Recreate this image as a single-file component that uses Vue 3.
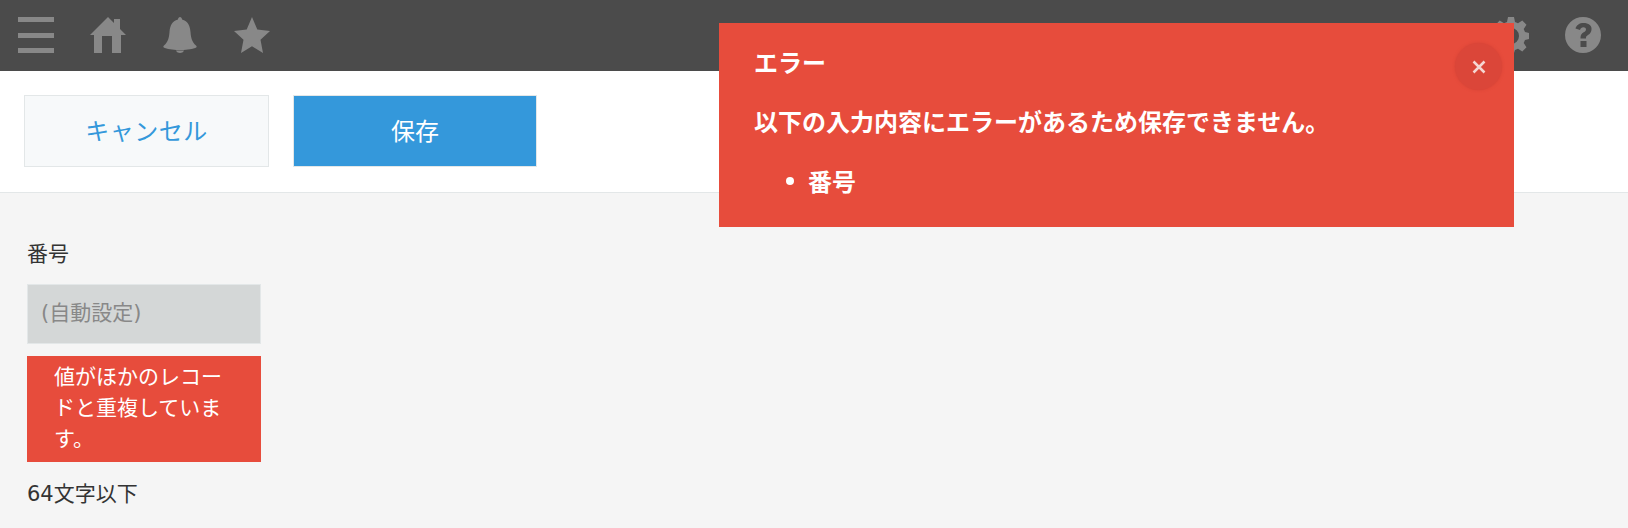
<script setup>
const errorLines = ['番号']
</script>

<template>
  <div class="page">
    <header class="top">
      <div class="top-group">
        <button class="top-btn" aria-label="menu">
          <svg viewBox="0 0 36 36" class="icon">
            <rect x="0" y="0" width="36" height="5" />
            <rect x="0" y="16" width="36" height="5" />
            <rect x="0" y="31" width="36" height="5" />
          </svg>
        </button>
        <button class="top-btn" aria-label="home">
          <svg viewBox="0 0 36 36" class="icon">
            <path d="M18 0 24 6V2h6v10L36 18H31V36H22V19H12V36H4V18H0Z" />
          </svg>
        </button>
        <button class="top-btn" aria-label="notifications">
          <svg viewBox="0 0 36 36" class="icon">
            <path d="M16 2.500C16 1 17 0 18 0s2 1 2 2.500C26 4 28 9 28.500 15c.5 6 1.500 10 5.500 13.500 1.200 1 .8 1.900-.8 2.400C29 32.300 23 33 18 33S7 32.300 2.800 30.900c-1.600-.5-2-1.400-.8-2.400C6 25 7 21 7.500 15 8 9 10 4 16 2.500Z" />
            <path d="M14 33.500h8C21.300 35.300 19.500 36 18 36s-3.300-.7-4-2.500Z" />
          </svg>
        </button>
        <button class="top-btn" aria-label="favorites">
          <svg viewBox="0 0 36 36" class="icon">
            <path d="M18 0 23.300 12.500 36 14 26.500 22.800 29 36 18 29.300 7 36 9.500 22.800 0 14 12.700 12.500Z" />
          </svg>
        </button>
      </div>
      <div class="top-group">
        <button class="top-btn" aria-label="settings">
          <svg viewBox="0 0 36 36" class="icon">
            <path fill-rule="evenodd" d="M15 0h6l1 5 3 1.300 4.300-2.800 4.200 4.200L30.700 12l1.300 3 4 1v6l-4 1-1.300 3 2.800 4.300-4.200 4.200L25 31.700 22 33l-1 3h-6l-1-3-3-1.300-4.300 2.800-4.200-4.200L5.300 26 4 23l-4-1v-6l4-1 1.300-3-2.800-4.300 4.200-4.200L11 6.300 14 5ZM18 11a8 8 0 1 0 0 16 8 8 0 0 0 0-16Z" />
          </svg>
        </button>
        <button class="top-btn" aria-label="help">
          <svg viewBox="0 0 36 36" class="icon">
            <path fill-rule="evenodd" d="M18 0a18 18 0 1 1 0 36 18 18 0 0 1 0-36ZM15.500 24v6h6v-6ZM18.500 6C14.500 6 11.500 8 10.500 11.500l4.500 1.500c.5-1.800 1.800-2.800 3.300-2.800 1.600 0 2.700.9 2.700 2.200 0 1.200-.8 1.900-2.300 2.900-2.200 1.400-3.200 3-3.200 5.700v.5h5.500v-.4c0-1.400.5-2 2-3 2.300-1.500 3.500-3.200 3.500-5.800C27 8.500 23.500 6 18.500 6Z" />
          </svg>
        </button>
      </div>
    </header>

    <div class="toolbar">
      <button class="btn cancel">キャンセル</button>
      <button class="btn save">保存</button>
    </div>

    <main class="content">
      <div class="field">
        <div class="label">番号</div>
        <div class="input">(自動設定)</div>
        <div class="field-error">値がほかのレコードと重複しています。</div>
        <div class="hint">64文字以下</div>
      </div>
    </main>

    <section class="notify">
      <h2 class="notify-title">エラー</h2>
      <p class="notify-msg">以下の入力内容にエラーがあるため保存できません。</p>
      <ul class="notify-list">
        <li v-for="line in errorLines" :key="line">{{ line }}</li>
      </ul>
      <button class="notify-close" aria-label="close">
        <svg viewBox="0 0 14 14" class="close-x">
          <path d="M1.500 1.500 12.500 12.500M12.500 1.500 1.500 12.500" />
        </svg>
      </button>
    </section>
  </div>
</template>

<style>
html, body {
  margin: 0;
  height: 100%;
  background: #f5f5f5;
  overflow: hidden;
}
</style>

<style scoped>
.page {
  position: relative;
  height: 528px;
  font-family: "Noto Sans CJK JP", "Noto Sans", sans-serif;
  color: #333;
  font-size: 21px;
  background: #f5f5f5;
  overflow: hidden;
}
.top {
  display: flex;
  justify-content: space-between;
  height: 71px;
  padding-right: 9px;
  background: #4b4b4b;
}
.top-group {
  display: flex;
}
.top-btn {
  width: 72px;
  height: 71px;
  padding: 17px 18px 18px;
  border: 0;
  background: none;
}
.icon {
  display: block;
  width: 36px;
  height: 36px;
  fill: #888;
}
.toolbar {
  display: flex;
  gap: 24px;
  height: 122px;
  box-sizing: border-box;
  padding: 24px 24px 25px;
  background: #fff;
  border-bottom: 1px solid #e3e7e8;
}
.btn {
  width: 244px;
  height: 72px;
  padding: 0 0 3px;
  font: inherit;
  font-size: 24px;
  border: 1px solid #e3e7e8;
}
.cancel {
  width: 245px;
  letter-spacing: 0.5px;
  background: #f7f9fa;
  color: #3498db;
}
.save {
  background: #3498db;
  color: #fff;
}
.content {
  padding: 42px 27px 0;
}
.field {
  width: 234px;
}
.label {
  line-height: 34px;
}
.input {
  box-sizing: border-box;
  height: 60px;
  margin-top: 15px;
  padding-left: 13px;
  font-family: "DejaVu Sans", "Noto Sans CJK JP", sans-serif;
  line-height: 56px;
  color: #888;
  background: #d4d7d7;
  border: 1px solid #e3e7e8;
}
.field-error {
  margin-top: 12px;
  padding: 4px 27px 9px;
  line-height: 31px;
  color: #fff;
  background: #e74c3c;
}
.hint {
  margin-top: 15px;
  font-family: "DejaVu Sans", "Noto Sans CJK JP", sans-serif;
  line-height: 34px;
}
.notify {
  position: absolute;
  top: 23px;
  left: 719px;
  box-sizing: border-box;
  width: 795px;
  height: 204px;
  padding: 22px 35px;
  color: #fff;
  font-size: 24px;
  font-weight: 700;
  background: #e74c3c;
}
.notify-title {
  margin: 0;
  font-size: 24px;
  font-weight: 700;
  line-height: 34px;
}
.notify-msg {
  margin: 25px 0 0;
  line-height: 34px;
}
.notify-list {
  margin: 26px 0 0;
  padding-left: 32px;
  line-height: 34px;
  list-style: none;
}
.notify-list li {
  display: flex;
  align-items: center;
  gap: 14px;
}
.notify-list li::before {
  content: '';
  width: 8px;
  height: 8px;
  border-radius: 50%;
  background: #fff;
}
.notify-close {
  position: absolute;
  top: 20px;
  right: 12px;
  display: flex;
  align-items: center;
  justify-content: center;
  width: 47px;
  height: 47px;
  padding: 0;
  border: 0;
  border-radius: 50%;
  background: #db4639;
  box-shadow: 0 0 3px rgba(200, 60, 50, 0.6);
}
.close-x {
  width: 14px;
  height: 14px;
  fill: none;
  stroke: #f5d6d2;
  stroke-width: 2.500;
}
</style>
